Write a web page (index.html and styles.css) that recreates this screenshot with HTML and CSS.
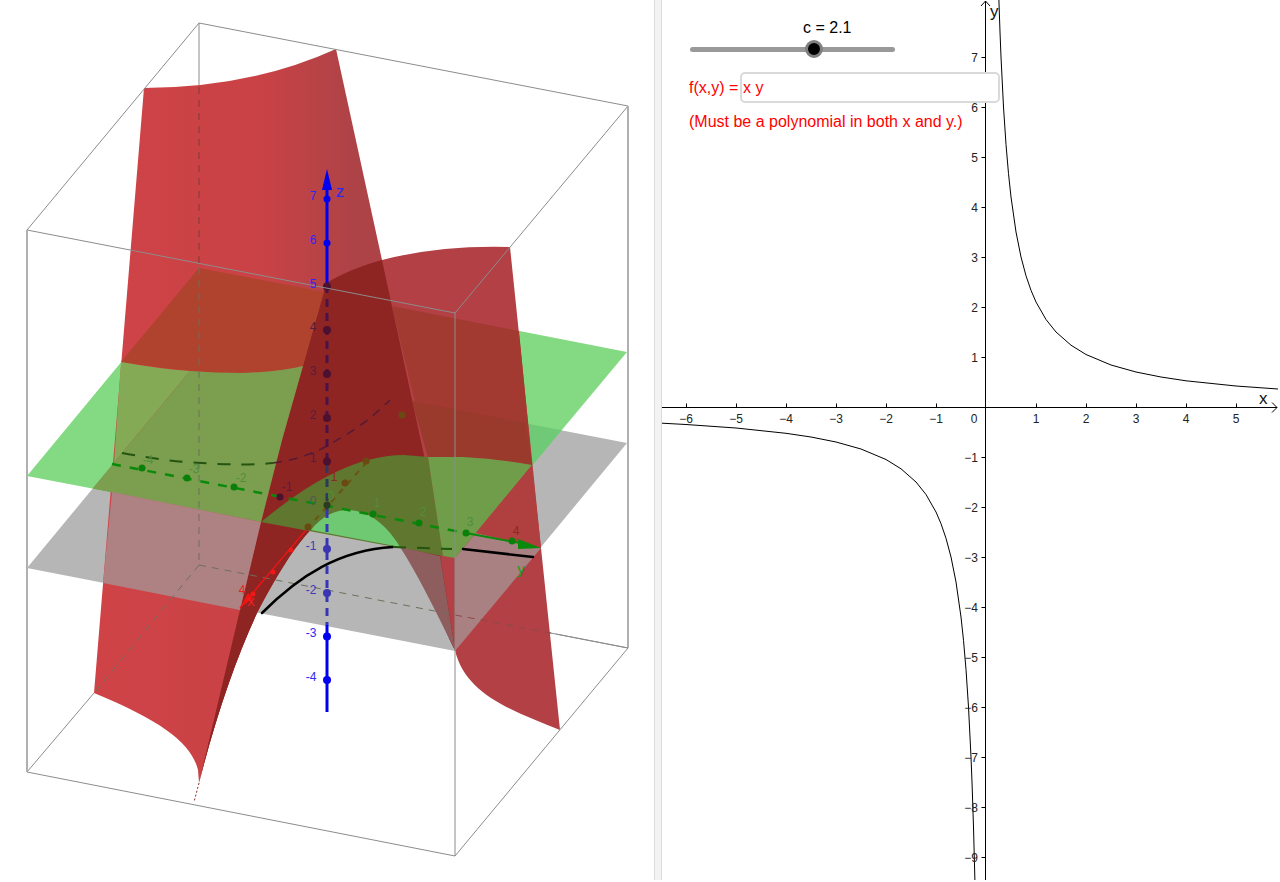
FILE: index.html
```html
<!DOCTYPE html>
<html>
<head>
<meta charset="utf-8">
<title>Level curves of f(x,y)</title>
<link rel="stylesheet" href="styles.css">
</head>
<body>
<div class="app">
  <div class="view3d">
    <svg class="scene" viewBox="0 0 654 880" width="654" height="880">
      <defs>
        <linearGradient id="sheetBack" gradientUnits="userSpaceOnUse" x1="94" y1="0" x2="400" y2="0">
          <stop offset="0" stop-color="#cf4347"/>
          <stop offset="0.55" stop-color="#c94245"/>
          <stop offset="0.85" stop-color="#ad4347"/>
        </linearGradient>
      </defs>

      <!-- back of the box -->
      <path class="edge" d="M199,23V267"/>
      <path class="edge" d="M199,565L628,648"/>
      <path class="edge" d="M94,693L27,772"/>

      <!-- planes -->
      <path class="plane-grey" d="M199,360L627,443L455,651L27,568Z"/>
      <path class="plane-green" d="M199,268L627,352L455,558L27,476Z"/>
      <path class="plane-both" d="M199,360L561.7,430.3L455,558L92.7,488.6Z"/>

      <!-- surface, whole sheets -->
      <path class="sheet-back" d="M144,88Q250,88 336,49L382,260L425,460L455,650C430,600 405,510 347,510C315,510 285,560 257,613C235,660 215,720 199,783L198,770C192,745 165,722 94,693Z"/>
      <path class="sheet-front" d="M326,283Q352,268 382,260Q440,245 510,247L530,440L541,548L560,730C515,712 465,695 455,650C430,600 405,510 347,510C315,510 285,560 257,613C235,660 215,720 199,783L240,610L261,522L282,440Z"/>
      <path class="sheet-overlap" d="M326,283Q352,268 382,260L425,460L455,650C430,600 405,510 347,510C315,510 285,560 257,613C235,660 215,720 199,783L240,610L261,522L282,440Z"/>
      <path class="sheet-tip" d="M199,783L194,802"/>

      <!-- surface seen through / against the planes -->
      <path class="brown" d="M199,268L324,292L303,366Q280,372 240,373Q198,374 121,362Z"/>
      <path class="olive-light" d="M121,362Q160,369 190,371L92.7,488.6L112,492Z"/>
      <path class="olive" d="M190,371Q215,373 240,373Q280,372 303,366L282,440L261,522L92.7,488.6Z"/>
      <path class="pink" d="M112,492L261,522L240,610L103,583Z"/>
      <path class="front-over-green" d="M392,306L519,331L532,465Q500,459 463,457L428,457Z"/>
      <path class="front-over-grey" d="M412,401L525,423L532,465Q500,459 463,457L428,457Z"/>
      <path class="olive-dark" d="M261,522C300,490 350,455 404,455L428,457L443,556Z"/>
      <path class="olive-right" d="M428,457L463,457Q500,459 532,465L455,558L443,556Z"/>
      <path class="green-arch" d="M311,530C322,516 335,510 347,510C370,510 388,527 400,547Z"/>
      <path class="pink-dark" d="M400,547L440,556L455,650C435,610 418,575 400,547Z"/>
      <path class="pink-right" d="M455,558L476,533L541,548L455,651Z"/>
      <path class="red-corner" d="M476,533L532,465L541,548Z"/>

      <!-- hidden box edges -->
      <path class="hidden-edge" d="M199,87V267"/>
      <path class="hidden-edge dim" d="M199,267V565"/>
      <path class="hidden-edge dim" d="M199,565L94,693"/>
      <path class="hidden-edge dim" d="M199,565L455,615"/>
      <path class="hidden-edge red" d="M455,615L556,634"/>

      <!-- level curve on the lower plane -->
      <path class="level-hidden" d="M122,453Q170,462 202,463Q245,466 273,463"/>
      <path class="level-purple" d="M273,463Q310,458 337,440Q365,425 390,400"/>
      <path class="level" d="M262,613C300,575 340,550 393,547"/>
      <path class="level-hidden" d="M393,547L452,549"/>
      <path class="level" d="M463,549L533,557"/>

      <!-- x axis -->
      <path class="x-dash" d="M367,462L306,530"/>
      <path class="x-line" d="M306,530L240,608"/>
      <path class="x-tip" d="M240,608L248,593L253,598Z"/>
      <circle class="dot x-dark" cx="402" cy="415" r="3.5"/>
      <circle class="dot x-dark" cx="366" cy="461" r="3.5"/>
      <circle class="dot x-dark" cx="345" cy="483" r="3.5"/>
      <circle class="dot x-dark" cx="308" cy="527" r="3.5"/>
      <circle class="dot x-red" cx="291" cy="550" r="2.5"/>
      <circle class="dot x-red" cx="273" cy="572" r="2.5"/>
      <circle class="dot x-red" cx="253" cy="594" r="2.5"/>

      <!-- y axis -->
      <path class="y-dash" d="M112,464L466,533"/>
      <path class="y-line" d="M466,533L525,544"/>
      <path class="y-tip" d="M541,548L518,539L518,549Z"/>
      <circle class="dot y-dot" cx="142" cy="468" r="3.5"/>
      <circle class="dot y-dot" cx="187" cy="478" r="3.5"/>
      <circle class="dot y-dot" cx="234" cy="487" r="3.5"/>
      <circle class="dot purple" cx="280" cy="497" r="3.5"/>
      <circle class="dot y-dot" cx="373" cy="514" r="3.5"/>
      <circle class="dot y-dot" cx="419" cy="523" r="3.5"/>
      <circle class="dot y-dot" cx="466" cy="533" r="3.5"/>
      <circle class="dot y-dot" cx="512" cy="541" r="3.5"/>

      <!-- z axis -->
      <path class="z-line" d="M327,190V285"/>
      <path class="z-dash purple-line" d="M327,285V465"/>
      <path class="z-dash olive-line" d="M327,465V510"/>
      <path class="z-dash blue-line" d="M327,510V625"/>
      <path class="z-line" d="M327,625V712"/>
      <path class="z-tip" d="M327,169L332,190H322Z"/>
      <circle class="dot z-blue" cx="327" cy="199" r="3.5"/>
      <circle class="dot z-blue" cx="327" cy="243" r="3.5"/>
      <circle class="dot purple" cx="327" cy="286.5" r="4"/>
      <circle class="dot purple" cx="327" cy="330" r="4"/>
      <circle class="dot purple" cx="327" cy="374" r="4"/>
      <circle class="dot purple" cx="327" cy="418" r="4"/>
      <circle class="dot purple" cx="327" cy="461.5" r="4"/>
      <circle class="dot origin" cx="327" cy="505" r="3.5"/>
      <circle class="dot z-mid" cx="327" cy="549" r="4"/>
      <circle class="dot z-mid" cx="327" cy="593" r="4"/>
      <circle class="dot z-blue" cx="327" cy="636.5" r="4"/>
      <circle class="dot z-blue" cx="327" cy="680" r="4"/>

      <!-- front of the box, drawn over everything -->
      <path class="edge" d="M199,23L628,106"/>
      <path class="edge" d="M199,23L27,230"/>
      <path class="edge" d="M27,230L455,313"/>
      <path class="edge" d="M628,106L455,313"/>
      <path class="edge thick" d="M27,230V772"/>
      <path class="edge thick" d="M628,106V648"/>
      <path class="edge" d="M455,313V856"/>
      <path class="edge" d="M27,772L455,856"/>
      <path class="edge" d="M455,856L628,648"/>
      <path class="edge" d="M556,634L628,648"/>

      <g class="tick-labels">
        <text class="lab-blue" x="313" y="200">7</text>
        <text class="lab-blue" x="313" y="244">6</text>
        <text class="lab-blue" x="313" y="288">5</text>
        <text class="lab-plum" x="313" y="331">4</text>
        <text class="lab-plum" x="313" y="375">3</text>
        <text class="lab-plum" x="313" y="419">2</text>
        <text class="lab-plum" x="313" y="462">1</text>
        <text class="lab-slate" x="313" y="505">0</text>
        <text class="lab-mid" x="311" y="550">-1</text>
        <text class="lab-mid" x="311" y="594">-2</text>
        <text class="lab-blue" x="311" y="637">-3</text>
        <text class="lab-blue" x="311" y="681">-4</text>
        <text class="lab-leaf" x="148" y="464">-4</text>
        <text class="lab-leaf" x="194" y="473">-3</text>
        <text class="lab-leaf" x="241" y="482">-2</text>
        <text class="lab-plum" x="287" y="491">-1</text>
        <text class="lab-leaf" x="331" y="500">0</text>
        <text class="lab-leaf" x="377" y="507">1</text>
        <text class="lab-leaf" x="423" y="516">2</text>
        <text class="lab-leaf" x="470" y="526">3</text>
        <text class="lab-rust" x="516" y="535">4</text>
        <text class="lab-rust" x="334" y="481">1</text>
        <text class="lab-red" x="242" y="594">4</text>
        <text class="axis-x" x="251" y="606">x</text>
        <text class="axis-y" x="521" y="574">y</text>
        <text class="axis-z" x="340" y="197">z</text>
      </g>
    </svg>
  </div>

  <div class="divider"></div>

  <div class="graph">
    <svg class="plot" viewBox="662 0 618 880" width="618" height="880">
      <path class="axis" d="M662,407.5H1277M1272,402.5L1277,407.5L1272,412.5"/>
      <path class="axis" d="M985.5,880V1M981,6L985.5,1L990,6"/>
      <path class="tick" d="M686.5,403.5V407M736.5,403.5V407M786.5,403.5V407M836.5,403.5V407M886.5,403.5V407M936.5,403.5V407M1036.5,403.5V407M1086.5,403.5V407M1136.5,403.5V407M1186.5,403.5V407M1236.5,403.5V407"/>
      <path class="tick" d="M981.5,57.5H985M981.5,107.5H985M981.5,157.5H985M981.5,207.5H985M981.5,257.5H985M981.5,307.5H985M981.5,357.5H985M981.5,457.5H985M981.5,507.5H985M981.5,557.5H985M981.5,607.5H985M981.5,657.5H985M981.5,707.5H985M981.5,757.5H985M981.5,807.5H985M981.5,857.5H985"/>

      <polyline class="curve" points="998.9,0 1000,32 1001,57 1003.5,107 1006,144.5 1008.5,173.7 1011,197 1016,232 1021,257 1026,275.8 1031,290.3 1036,302 1046,319.5 1056,332 1071,345.2 1086,354.5 1111,365 1136,372 1161,377 1186,380.8 1236,386 1278,389"/>
      <polyline class="curve" points="662,423.2 686,424.5 736,428 786,433.3 811,437 836,442 861,449 886,459.5 901,468.8 916,482 926,494.5 936,512 941,523.7 946,538.3 951,557 956,582 961,617 963.5,640.3 966,669.5 968.5,707 971,757 972,782 973.5,827 974.9,880"/>

      <g class="x-labels">
        <text x="686" y="423">−6</text>
        <text x="736" y="423">−5</text>
        <text x="786" y="423">−4</text>
        <text x="836" y="423">−3</text>
        <text x="886" y="423">−2</text>
        <text x="936" y="423">−1</text>
        <text x="974" y="423">0</text>
        <text x="1036" y="423">1</text>
        <text x="1086" y="423">2</text>
        <text x="1136" y="423">3</text>
        <text x="1186" y="423">4</text>
        <text x="1236" y="423">5</text>
      </g>
      <g class="y-labels">
        <text x="978" y="62">7</text>
        <text x="978" y="112">6</text>
        <text x="978" y="162">5</text>
        <text x="978" y="212">4</text>
        <text x="978" y="262">3</text>
        <text x="978" y="312">2</text>
        <text x="978" y="362">1</text>
        <text x="978" y="462">−1</text>
        <text x="978" y="512">−2</text>
        <text x="978" y="562">−3</text>
        <text x="978" y="612">−4</text>
        <text x="978" y="662">−5</text>
        <text x="978" y="712">−6</text>
        <text x="978" y="762">−7</text>
        <text x="978" y="812">−8</text>
        <text x="978" y="862">−9</text>
      </g>
      <text class="axis-name" x="1259" y="404">x</text>
      <text class="axis-name" x="990" y="17">y</text>
    </svg>

    <div class="controls">
      <div class="slider-label">c = 2.1</div>
      <div class="slider">
        <div class="track"></div>
        <div class="handle"></div>
      </div>
      <div class="formula">
        <label class="formula-label" for="fn">f(x,y) =</label>
        <input class="formula-input" id="fn" type="text" value="x y">
      </div>
      <div class="hint">(Must be a polynomial in both x and y.)</div>
    </div>
  </div>
</div>
</body>
</html>
```

FILE: styles.css
```css
* {
    margin: 0;
    padding: 0;
    box-sizing: border-box;
}

html, body {
    width: 100%;
    height: 100%;
    background: #fff;
    overflow: hidden;
    font-family: "Liberation Sans", Arial, sans-serif;
}

.app {
    display: flex;
    width: 1280px;
    height: 880px;
}

.view3d {
    width: 654px;
    flex: none;
}

.scene, .plot {
    display: block;
}

.divider {
    width: 8px;
    flex: none;
    background: #f3f3f3;
    border-left: 1px solid #dcdcdc;
    border-right: 1px solid #dcdcdc;
}

.graph {
    position: relative;
    flex: 1;
    overflow: hidden;
}

/* 3d view */
.edge { fill: none; stroke: #8c8c8c; stroke-width: 1; }
.edge.thick { stroke: #b0b0b0; stroke-width: 2; }
.hidden-edge { fill: none; stroke: #7d3a38; stroke-width: 1; stroke-dasharray: 7 6; }
.hidden-edge.dim { stroke: #6f6f5c; }
.hidden-edge.red { stroke: #8a4a48; }

.plane-grey { fill: #b6b6b6; }
.plane-green { fill: #84da82; }
.plane-both { fill: #70c976; }

.sheet-back { fill: url(#sheetBack); }
.sheet-front { fill: #b24045; }
.sheet-overlap { fill: #8e2522; }
.sheet-tip { fill: none; stroke: #8e2522; stroke-width: 1; stroke-dasharray: 2 2; }

.brown { fill: #b0432d; }
.olive { fill: #7b9f4e; }
.olive-light { fill: #84aa56; }
.pink { fill: #ae8182; }
.front-over-green { fill: #a33a31; }
.front-over-grey { fill: #993a2c; }
.olive-dark { fill: #5f772e; }
.olive-right { fill: #6f9d4a; }
.green-arch { fill: #6fc973; }
.pink-dark { fill: #8e5e5e; }
.pink-right { fill: #a98182; }
.red-corner { fill: #b0403f; }

.level { fill: none; stroke: #000; stroke-width: 2.5; stroke-linecap: round; }
.level-hidden { fill: none; stroke: #245410; stroke-width: 2; stroke-dasharray: 13 11; }
.level-purple { fill: none; stroke: #541a38; stroke-width: 1.5; stroke-dasharray: 9 7; }

.x-dash { fill: none; stroke: #6b5512; stroke-width: 2; stroke-dasharray: 6 6; }
.x-line { fill: none; stroke: #f21414; stroke-width: 1.2; }
.x-tip { fill: #f21414; }
.x-dark { fill: #6b4a12; }
.x-red { fill: #f01818; }

.y-dash { fill: none; stroke: #0a8a0a; stroke-width: 2.5; stroke-dasharray: 9 9; }
.y-line { fill: none; stroke: #0a8a0a; stroke-width: 2; }
.y-tip { fill: #0a8a0a; }
.y-dot { fill: #0a800a; }

.z-line { fill: none; stroke: #0000f0; stroke-width: 3; }
.z-dash { fill: none; stroke-width: 3; stroke-dasharray: 8 6; }
.purple-line { stroke: #4a1246; }
.olive-line { stroke: #2c3a5a; }
.blue-line { stroke: #3636b4; }
.z-tip { fill: #0000f0; }
.z-blue { fill: #0000f0; }
.z-mid { fill: #3a35b0; }
.purple { fill: #4c1030; }
.origin { fill: #2c3a20; }

.tick-labels text {
    font-size: 12px;
    text-anchor: middle;
}
.lab-blue { fill: #2a2af0; }
.lab-plum { fill: #5a1c3c; }
.lab-slate { fill: #4e5a50; }
.lab-mid { fill: #3c3cb4; }
.lab-leaf { fill: #4f8f3c; }
.lab-rust { fill: #8a2a22; }
.lab-red { fill: #f02020; }
.tick-labels .axis-x { fill: #f02020; font-size: 15px; }
.tick-labels .axis-y { fill: #1a9a1a; font-size: 15px; }
.tick-labels .axis-z { fill: #2a2af0; font-size: 17px; }

/* 2d graph */
.axis { fill: none; stroke: #000; stroke-width: 1; }
.tick { fill: none; stroke: #000; stroke-width: 1; }
.curve { fill: none; stroke: #000; stroke-width: 1; }

.x-labels text, .y-labels text {
    font-size: 12px;
    fill: #222;
}
.x-labels text { text-anchor: middle; }
.y-labels text { text-anchor: end; }

.axis-name {
    font-size: 17px;
    fill: #111;
}

/* widgets over the graph */
.controls {
    position: absolute;
    top: 0;
    left: 0;
    padding: 19px 0 0 27px;
    display: flex;
    flex-direction: column;
    font-size: 16px;
}

.slider-label {
    line-height: 18px;
    margin-left: 114px;
    color: #000;
}

.slider {
    position: relative;
    width: 205px;
    height: 18px;
    margin: 3px 0 0 1px;
    display: flex;
    align-items: center;
}

.track {
    width: 100%;
    height: 5px;
    border-radius: 3px;
    background: #999;
}

.handle {
    position: absolute;
    left: 115px;
    top: 0;
    width: 18px;
    height: 18px;
    border-radius: 50%;
    background: #000;
    border: 3px solid #808080;
}

.formula {
    display: flex;
    align-items: center;
    margin-top: 14px;
    color: #f00;
}

.formula-label {
    width: 51px;
    flex: none;
    white-space: nowrap;
}

.formula-input {
    width: 260px;
    height: 31px;
    padding-left: 1px;
    border: 2px solid #dadada;
    border-radius: 5px;
    background: #fff;
    color: #f00;
    font: 16px "Liberation Sans", Arial, sans-serif;
    outline: none;
}

.hint {
    margin-top: 9px;
    line-height: 20px;
    color: #f00;
    white-space: nowrap;
}
```
